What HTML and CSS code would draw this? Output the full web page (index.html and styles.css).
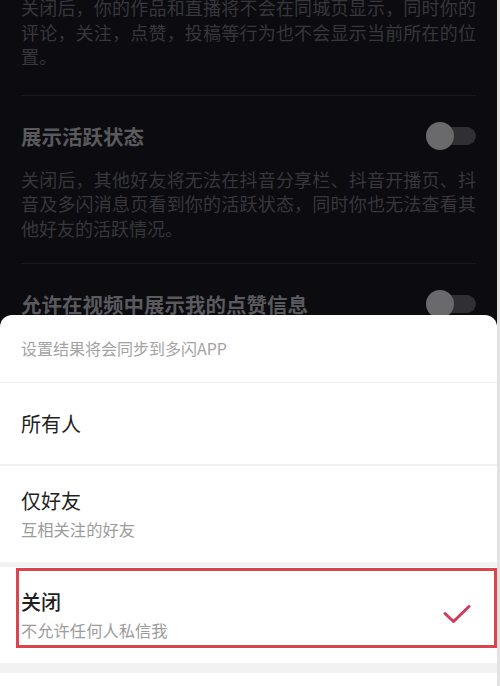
FILE: index.html
```html
<!DOCTYPE html>
<html lang="zh-CN">
<head>
<meta charset="utf-8">
<title>私信设置</title>
<link rel="stylesheet" href="styles.css">
</head>
<body>
<div class="screen">
  <div class="settings">
    <section class="setting setting-partial">
      <p class="desc">关闭后，你的作品和直播将不会在同城页显示，同时你的评论，关注，点赞，投稿等行为也不会显示当前所在的位置。</p>
    </section>
    <section class="setting">
      <div class="setting-row">
        <span class="setting-title">展示活跃状态</span>
        <span class="toggle"><span class="toggle-knob"></span></span>
      </div>
      <p class="desc">关闭后，其他好友将无法在抖音分享栏、抖音开播页、抖音及多闪消息页看到你的活跃状态，同时你也无法查看其他好友的活跃情况。</p>
    </section>
    <section class="setting setting-last">
      <div class="setting-row">
        <span class="setting-title">允许在视频中展示我的点赞信息</span>
        <span class="toggle"><span class="toggle-knob"></span></span>
      </div>
    </section>
  </div>

  <div class="sheet">
    <div class="sheet-header">设置结果将会同步到多闪APP</div>
    <div class="option option-simple">
      <span class="option-title">所有人</span>
    </div>
    <div class="option option-sub option-gap">
      <div class="option-text">
        <span class="option-title">仅好友</span>
        <span class="option-subtitle">互相关注的好友</span>
      </div>
    </div>
    <div class="option option-sub option-selected">
      <div class="option-text">
        <span class="option-title option-title-strong">关闭</span>
        <span class="option-subtitle">不允许任何人私信我</span>
      </div>
      <svg class="check" width="28" height="20" viewBox="0 0 28 20" aria-hidden="true">
        <path d="M2 9.5 L10.5 17.5 L26 2.5" fill="none" stroke="#d23a5c" stroke-width="3" stroke-linecap="round" stroke-linejoin="round"/>
      </svg>
      <span class="highlight-box"></span>
    </div>
    <div class="sheet-band"></div>
    <div class="sheet-footer"></div>
  </div>
</div>
</body>
</html>
```

FILE: styles.css
```css
* {
  box-sizing: border-box;
}

html, body {
  margin: 0;
  padding: 0;
}

body {
  background: #e2e2e2;
  font-family: "Noto Sans CJK SC", "Noto Sans", sans-serif;
}

.screen {
  position: relative;
  width: 497px;
  height: 686px;
  overflow: hidden;
  background: #0b0b10;
}

.settings {
  padding: 0 21px;
}

.setting {
  border-bottom: 1px solid #19191e;
  padding: 26px 0 23px;
}

.setting-partial {
  padding-top: 0;
  margin-top: -5px;
  padding-bottom: 26px;
}

.setting-last {
  border-bottom: none;
}

.setting-row {
  display: flex;
  align-items: center;
  justify-content: space-between;
  height: 28px;
}

.setting-title {
  font-size: 20.5px;
  font-weight: 700;
  color: #5a5a5e;
  line-height: 28px;
}

.desc {
  margin: 17px 0 0;
  font-size: 18px;
  line-height: 24.5px;
  color: #37373c;
  text-align: justify;
}

.setting-partial .desc {
  margin-top: 0;
}

.toggle {
  position: relative;
  display: flex;
  align-items: center;
  width: 50px;
  height: 28px;
}

.toggle::before {
  content: "";
  position: absolute;
  left: 14px;
  right: 0;
  top: 5px;
  height: 18px;
  border-radius: 9px;
  background: #303034;
}

.toggle-knob {
  position: relative;
  width: 28px;
  height: 28px;
  border-radius: 50%;
  background: #6a6a6c;
}

.sheet {
  position: absolute;
  left: 0;
  right: 0;
  bottom: 0;
  background: #ffffff;
  border-radius: 12px 12px 0 0;
  display: flex;
  flex-direction: column;
}

.sheet-header {
  height: 68px;
  display: flex;
  align-items: center;
  padding: 0 21px 1px;
  font-size: 16px;
  color: #a3a3a3;
  border-bottom: 1px solid #efefef;
}

.option {
  position: relative;
  display: flex;
  align-items: center;
  justify-content: space-between;
  padding: 0 21px;
}

.option-simple {
  height: 83px;
  border-bottom: 2px solid #f1f1f1;
}

.option-sub {
  height: 96px;
}

.option-gap {
  height: 101px;
  border-bottom: 5px solid #f3f3f3;
}

.option-text {
  display: flex;
  flex-direction: column;
  gap: 2px;
}

.option-title {
  font-size: 20px;
  line-height: 28px;
  font-weight: 400;
  color: #1f1f1f;
}

.option-title-strong {
  font-weight: 500;
}

.option-subtitle {
  font-size: 16.3px;
  line-height: 24px;
  color: #9c9c9c;
}

.check {
  margin-right: 5px;
  margin-top: -2px;
}

.highlight-box {
  position: absolute;
  left: 16px;
  right: 0;
  top: 1px;
  height: 80px;
  border: 3px solid #d8454d;
}

.sheet-band {
  height: 10px;
  background: #f2f2f2;
}

.sheet-footer {
  height: 13px;
  background: #ffffff;
}
```
